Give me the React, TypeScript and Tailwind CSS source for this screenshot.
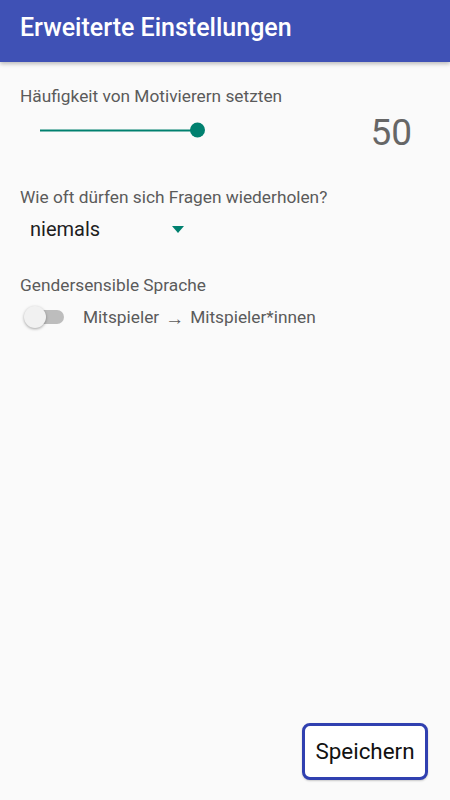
import React from "react";

const SettingsScreen = () => {
  return (
    <div
      className="flex h-[800px] w-full flex-col bg-[#fafafa]"
      style={{ fontFamily: "Roboto, 'Liberation Sans', sans-serif" }}
    >
      {/* App bar */}
      <div className="z-10 h-[62px] shrink-0 bg-[#3f51b5] px-5 pt-[14.2px] shadow-[0_2px_4px_rgba(0,0,0,0.25)]">
        <h1 className="text-[25px] font-medium leading-[28px] text-white">Erweiterte Einstellungen</h1>
      </div>

      {/* Motivierer */}
      <div className="mt-[23.8px] pl-5 text-[17.3px] leading-[20px] text-[#5b5b5b]">
        Häufigkeit von Motivierern setzten
      </div>
      <div className="mt-[6.7px] flex h-[40px] items-center">
        <div className="relative ml-[40px] h-[16px] w-[165px] -translate-y-[1.5px]">
          <div className="absolute left-0 top-[7px] h-[2px] w-[157px] bg-[#00806f]" />
          <div className="absolute left-[149.5px] top-0 h-[15px] w-[15px] rounded-full bg-[#00806f]" />
        </div>
        <div className="ml-auto mr-[38px] text-[37px] leading-none text-[#666666]">50</div>
      </div>

      {/* Wiederholen */}
      <div className="mt-[34.9px] pl-5 text-[17.3px] leading-[20px] text-[#5b5b5b]">
        Wie oft dürfen sich Fragen wiederholen?
      </div>
      <div className="mt-[9.8px] flex h-[24px] items-center pl-[30px]">
        <span className="w-[142px] text-[20px] leading-[24px] text-[#1e1e1e]">niemals</span>
        <svg width="12" height="7" viewBox="0 0 12 7" className="mt-[1px]">
          <polygon points="0,0 12,0 6,7" fill="#00806f" />
        </svg>
      </div>

      {/* Gender */}
      <div className="mt-[33.6px] pl-5 text-[17.3px] leading-[20px] text-[#5b5b5b]">
        Gendersensible Sprache
      </div>
      <div className="mt-[10.6px] flex h-[24px] items-center pl-[24px]">
        <div className="relative h-[24px] w-[40px]">
          <div className="absolute left-[10px] top-[5px] h-[14px] w-[30px] rounded-full bg-[#bdbdbd]" />
          <div className="absolute left-0 top-[1px] h-[22px] w-[22px] rounded-full bg-[#f1f1f1] shadow-[0_1px_3px_rgba(0,0,0,0.35)]" />
        </div>
        <span className="ml-[19px] flex items-center text-[17.3px] leading-[20px] text-[#5b5b5b]">
          Mitspieler
          <span className="mx-[6px] mt-[3px] text-[19px] leading-[14px]">→</span>
          Mitspieler*innen
        </span>
      </div>

      {/* Save */}
      <div className="mt-auto flex justify-end pb-[20px] pr-[22px]">
        <button className="h-[57px] w-[126px] rounded-[8px] border-[3px] border-[#3040b0] bg-white text-[22.4px] text-[#111111] shadow-[0_1px_2px_rgba(0,0,0,0.2)]">
          Speichern
        </button>
      </div>
    </div>
  );
};

export default function App() {
  return <SettingsScreen />;
}
